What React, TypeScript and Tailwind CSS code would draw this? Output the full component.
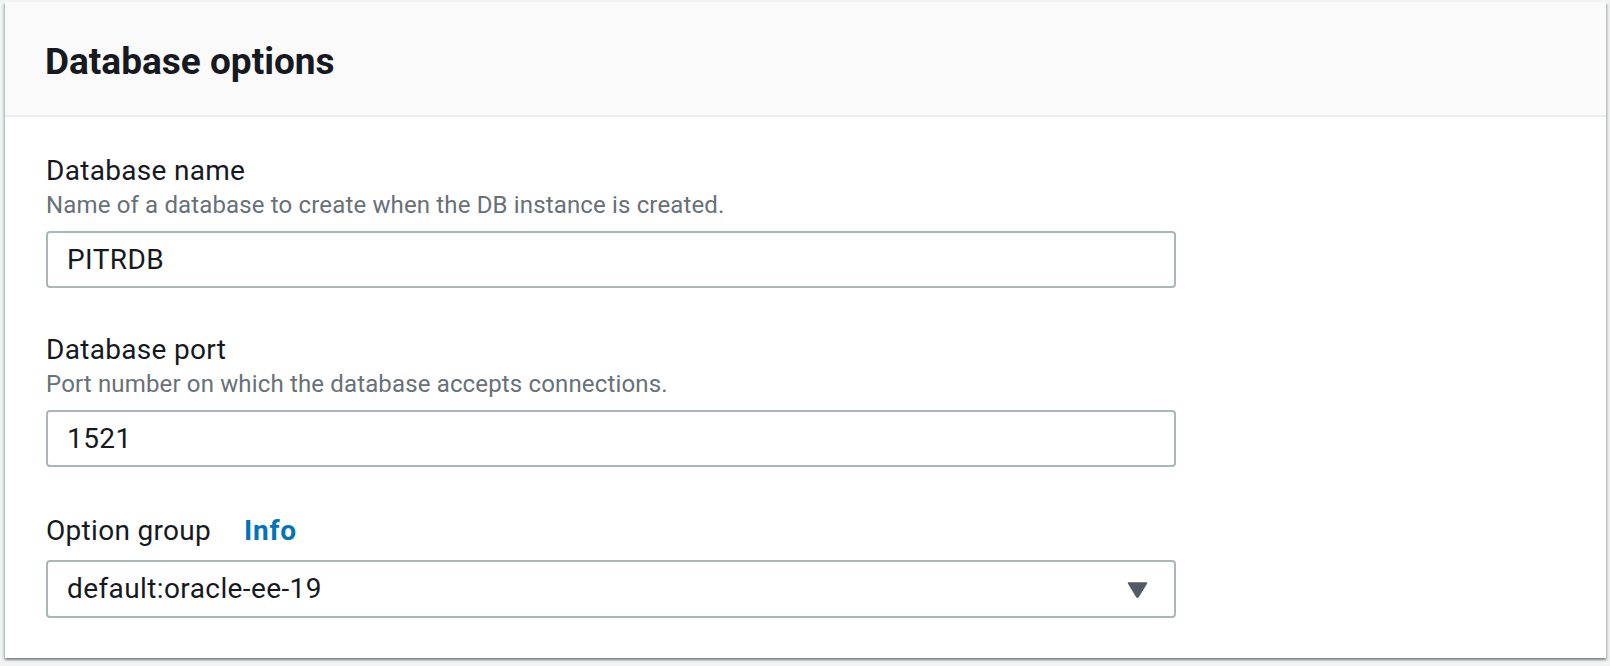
import React from 'react';

type FieldProps = {
  label: string;
  description?: string;
  value: string;
  select?: boolean;
  info?: boolean;
  className?: string;
};

const Field: React.FC<FieldProps> = ({ label, description, value, select, info, className }) => {
  return (
    <div className={className}>
      <div className="flex items-baseline text-[28px] leading-[36px] tracking-[0.3px] text-[#16191f]">
        <span>{label}</span>
        {info && <a className="ml-[33px] font-bold tracking-[0.8px] text-[#0073bb]">Info</a>}
      </div>
      {description && (
        <div className="text-[24px] leading-[32px] tracking-[0.15px] text-[#687078]">{description}</div>
      )}
      <div
        className={
          (description ? 'mt-[10px] h-[57px] ' : 'mt-[11px] h-[58px] ') +
          'flex w-[1130px] items-center justify-between rounded-[4px] border-2 border-[#aab7b8] bg-white pl-[19px] pr-[26px] text-[28px] tracking-[0.4px] text-[#16191f]'
        }
      >
        <span>{value}</span>
        {select && (
          <svg width="21" height="16" viewBox="0 0 21 16" className="mt-[1px]">
            <path d="M1.5 1 H19.5 L11.3 14.6 Q10.5 15.8 9.7 14.6 Z" fill="#545b64" stroke="#545b64" strokeWidth="1.5" strokeLinejoin="round" />
          </svg>
        )}
      </div>
    </div>
  );
};

export default function App() {
  return (
    <div className="min-h-screen bg-[#f2f3f3] pt-[2px] pl-[5px] pr-[4px] font-['Roboto',sans-serif]">
      <div className="bg-white shadow-[0_2px_2px_0_rgba(0,28,36,0.3),2px_2px_2px_0_rgba(0,28,36,0.15),-2px_2px_2px_0_rgba(0,28,36,0.15)]">
        <div className="border-b-2 border-[#eaeded] bg-[#fafafa] px-[40px] pt-[38px] pb-[31px]">
          <h2 className="text-[37px] leading-[44px] font-bold text-[#16191f]">Database options</h2>
        </div>
        <div className="px-[41px] pt-[36px] pb-[40px]">
          <Field
            label="Database name"
            description="Name of a database to create when the DB instance is created."
            value="PITRDB"
          />
          <Field
            className="mt-[44px]"
            label="Database port"
            description="Port number on which the database accepts connections."
            value="1521"
          />
          <Field className="mt-[46px]" label="Option group" info value="default:oracle-ee-19" select />
        </div>
      </div>
    </div>
  );
}
